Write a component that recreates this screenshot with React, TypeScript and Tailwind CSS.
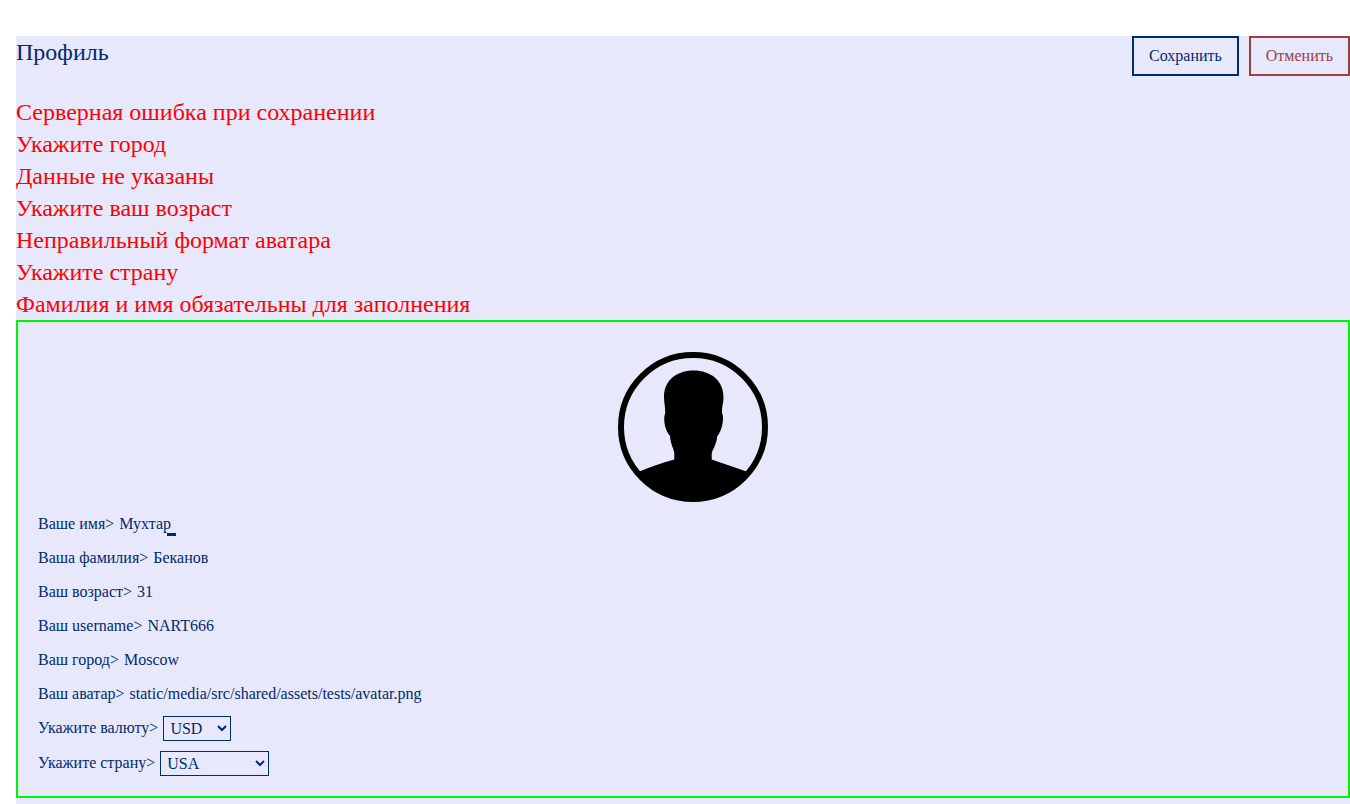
import React from "react";

const errors = [
  "Серверная ошибка при сохранении",
  "Укажите город",
  "Данные не указаны",
  "Укажите ваш возраст",
  "Неправильный формат аватара",
  "Укажите страну",
  "Фамилия и имя обязательны для заполнения",
];

const fields = [
  { label: "Ваше имя>", value: "Мухтар", caret: true },
  { label: "Ваша фамилия>", value: "Беканов" },
  { label: "Ваш возраст>", value: "31" },
  { label: "Ваш username>", value: "NART666" },
  { label: "Ваш город>", value: "Moscow" },
  { label: "Ваш аватар>", value: "static/media/src/shared/assets/tests/avatar.png" },
];

function Avatar() {
  return (
    <svg width="150" height="150" viewBox="0 0 150 150">
      <circle cx="75" cy="75" r="72" fill="none" stroke="#000" strokeWidth="6" />
      <path d="M75.500 18.500C93 18.500 105.500 29 105.500 45C105.500 51 103.700 55 104 61C106.500 65 104.500 78 99.200 84.500C98.500 93 94 98 93.700 102V107.500L128.500 119.500A70 70 0 0 1 75 148A70 70 0 0 1 21.500 119.500C32 115 43 111 56.300 107.500V101C55.500 96 52.500 92 52 84C46.500 78 45 66 47.200 61C47.500 55 46 51 46 45C46 29 58 18.500 75.500 18.500Z" />
    </svg>
  );
}

function Choice({ label, value, className }: { label: string; value: string; className: string }) {
  return (
    <div className="flex">
      <span className="mr-[5px]">{label}</span>
      <select className={className} defaultValue={value}>
        <option>{value}</option>
      </select>
    </div>
  );
}

export default function App() {
  return (
    <div className="h-[804px] overflow-hidden bg-white pt-9 pl-4 font-['Liberation_Serif',serif] text-base text-[#002a6c]">
      <main className="h-[768px] bg-[#e8e8fc]">
        <header className="flex h-[60px] items-start">
          <h1 className="grow text-2xl leading-8">Профиль</h1>
          <button className="mr-2.5 h-10 border-2 border-[#002a6c] px-[15px]">Сохранить</button>
          <button className="h-10 border-2 border-[#9a4040] px-[15px] text-[#9a4040]">Отменить</button>
        </header>
        {errors.map((e) => (
          <p key={e} className="text-2xl leading-8 text-[#ff0000]">{e}</p>
        ))}
        <section className="h-[478px] border-2 border-[#00f500] px-5 pt-[30px]">
          <div className="flex justify-center pl-5">
            <Avatar />
          </div>
          <div className="mt-2.5 flex flex-col gap-2.5">
            {fields.map((f) => (
              <div key={f.label} className="flex h-6">
                <span className="mr-[5px]">{f.label}</span>
                <span className="relative">
                  {f.value}
                  {f.caret && <i className="absolute top-[21px] left-12 h-[3px] w-[9px] bg-[#002a6c]" />}
                </span>
              </div>
            ))}
            <Choice label="Укажите валюту>" value="USD" className="h-[25px] w-[68px] border border-[#002a6c] px-0.5" />
            <Choice label="Укажите страну>" value="USA" className="h-[25px] w-[109px] border border-[#002a6c] px-0.5" />
          </div>
        </section>
      </main>
    </div>
  );
}
